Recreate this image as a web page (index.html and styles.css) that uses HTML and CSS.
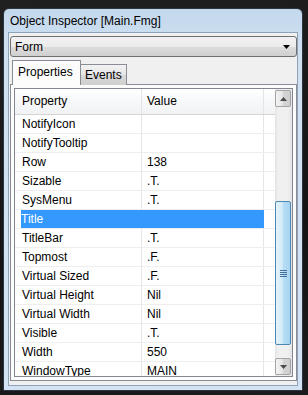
FILE: index.html
```html
<!DOCTYPE html>
<html lang="en">
<head>
    <meta charset="UTF-8">
    <title>Object Inspector</title>
    <link rel="stylesheet" href="styles.css">
</head>
<body>
    <div class="window">
        <div class="titlebar">Object Inspector [Main.Fmg]</div>
        <div class="client">
            <div class="combo">
                <span>Form</span>
                <svg class="arrow" width="7" height="4" viewBox="0 0 7 4"><path d="M0 0h7L3.5 4z" fill="#000"/></svg>
            </div>
            <div class="tabs">
                <div class="tab active">Properties</div>
                <div class="tab">Events</div>
            </div>
            <div class="page">
                <div class="grid">
                    <div class="list">
                        <div class="head">
                            <div class="ind"></div>
                            <div class="c1">Property</div>
                            <div class="c2">Value</div>
                            <div class="fill"></div>
                        </div>
                        <div class="row"><div class="ind"></div><div class="c1">NotifyIcon</div><div class="c2"></div><div class="fill"></div></div>
                        <div class="row"><div class="ind"></div><div class="c1">NotifyTooltip</div><div class="c2"></div><div class="fill"></div></div>
                        <div class="row"><div class="ind"></div><div class="c1">Row</div><div class="c2">138</div><div class="fill"></div></div>
                        <div class="row"><div class="ind"></div><div class="c1">Sizable</div><div class="c2">.T.</div><div class="fill"></div></div>
                        <div class="row"><div class="ind"></div><div class="c1">SysMenu</div><div class="c2">.T.</div><div class="fill"></div></div>
                        <div class="row selected"><div class="ind"></div><div class="c1">Title</div><div class="c2"></div><div class="fill"></div></div>
                        <div class="row"><div class="ind"></div><div class="c1">TitleBar</div><div class="c2">.T.</div><div class="fill"></div></div>
                        <div class="row"><div class="ind"></div><div class="c1">Topmost</div><div class="c2">.F.</div><div class="fill"></div></div>
                        <div class="row"><div class="ind"></div><div class="c1">Virtual Sized</div><div class="c2">.F.</div><div class="fill"></div></div>
                        <div class="row"><div class="ind"></div><div class="c1">Virtual Height</div><div class="c2">Nil</div><div class="fill"></div></div>
                        <div class="row"><div class="ind"></div><div class="c1">Virtual Width</div><div class="c2">Nil</div><div class="fill"></div></div>
                        <div class="row"><div class="ind"></div><div class="c1">Visible</div><div class="c2">.T.</div><div class="fill"></div></div>
                        <div class="row"><div class="ind"></div><div class="c1">Width</div><div class="c2">550</div><div class="fill"></div></div>
                        <div class="row"><div class="ind"></div><div class="c1">WindowType</div><div class="c2">MAIN</div><div class="fill"></div></div>
                    </div>
                    <div class="scroll">
                        <div class="sbtn">
                            <svg width="7" height="4" viewBox="0 0 7 4"><path d="M0 4h7L3.5 0z" fill="#4a4a4a"/></svg>
                        </div>
                        <div class="track">
                            <div class="gap-top"></div>
                            <div class="thumb">
                                <div class="grip"></div>
                            </div>
                        </div>
                        <div class="sbtn">
                            <svg width="7" height="4" viewBox="0 0 7 4"><path d="M0 0h7L3.5 4z" fill="#4a4a4a"/></svg>
                        </div>
                    </div>
                </div>
            </div>
        </div>
    </div>
</body>
</html>
```

FILE: styles.css
```css
* {
    box-sizing: border-box;
}

body {
    margin: 0;
    padding: 8px 0 0 3px;
    height: 395px;
    overflow: hidden;
    background: linear-gradient(170deg, #202020, #141414 60%, #1c1c1c);
    font-family: "Liberation Sans", Arial, sans-serif;
    font-size: 12px;
    color: #000;
}

.window {
    width: 300px;
    height: 383px;
    border: 1px solid #2b3440;
    border-radius: 6px 6px 0 0;
    background: linear-gradient(#c4d8ec, #cfe0f1 40px, #d3e3f3);
}

.titlebar {
    height: 23px;
    line-height: 25px;
    padding-left: 6px;
    white-space: nowrap;
}

.client {
    margin: 0 4px;
    height: 354px;
    border: 1px solid #8fa3b8;
    background-color: #f0f0f0;
    display: flex;
    flex-direction: column;
}

.combo {
    margin: 3px 0 0 1px;
    width: 287px;
    height: 21px;
    border: 1px solid #707070;
    border-radius: 3px;
    background: linear-gradient(#f2f2f2, #ebebeb 50%, #dddddd 51%, #cfcfcf);
    display: flex;
    align-items: center;
    justify-content: space-between;
    padding: 0 6px 0 4px;
}

.tabs {
    margin: 3px 0 -1px 3px;
    height: 25px;
    display: flex;
    align-items: flex-end;
    position: relative;
}

.tab {
    height: 21px;
    padding: 0 4px;
    line-height: 21px;
    border: 1px solid #898c95;
    border-bottom: none;
    background: linear-gradient(#f2f2f2, #e6e6e6 50%, #d9d9d9 51%, #cfcfcf);
}

.tab.active {
    height: 25px;
    width: 69px;
    padding: 0 5px;
    line-height: 22px;
    margin-right: -1px;
    background: #fcfcfc;
    position: relative;
    z-index: 1;
}

.page {
    margin-left: 1px;
    width: 287px;
    height: 297px;
    border: 1px solid #898c95;
    background-color: #fcfcfc;
    padding: 3px;
}

.grid {
    width: 279px;
    height: 289px;
    border: 1px solid #828790;
    background-color: #fff;
    display: flex;
}

.list {
    width: 260px;
    overflow: hidden;
}

.head, .row {
    display: flex;
}

.head {
    height: 26px;
    line-height: 25px;
    background: linear-gradient(#ffffff, #f7f8f9 50%, #f1f2f4);
    border-bottom: 1px solid #d5d5d5;
}

.row {
    height: 19px;
    line-height: 19px;
    border-bottom: 1px solid #eeeeee;
}

.ind {
    width: 6px;
}

.c1 {
    width: 121px;
    padding-left: 1px;
    border-right: 1px solid #e5e5e5;
    white-space: nowrap;
}

.c2 {
    width: 122px;
    padding-left: 5px;
    border-right: 1px solid #e5e5e5;
}

.fill {
    flex: 1;
}

.row.selected .c1,
.row.selected .c2 {
    background-color: #3399ff;
    color: #fff;
    border-right-color: #3399ff;
}

.row.selected .c1 {
    padding-left: 0;
}

.scroll {
    width: 17px;
    padding: 1px 0;
    display: flex;
    flex-direction: column;
    background: linear-gradient(to right, #e3e3e3, #f0f0f0 3px, #f0f0f0 13px, #e3e3e3);
}

.sbtn {
    height: 17px;
    border: 1px solid #a3a3a3;
    border-radius: 2px;
    margin: 0 1px 0 0;
    background: linear-gradient(to right, #f4f4f4, #e4e4e4 50%, #d4d4d4 51%, #cfcfcf);
    display: flex;
    align-items: center;
    justify-content: center;
}

.track {
    flex: 1;
    display: flex;
    flex-direction: column;
}

.gap-top {
    height: 94px;
}

.thumb {
    height: 144px;
    margin-right: 1px;
    border: 1px solid #4f87b3;
    border-radius: 2px;
    background: linear-gradient(to right, #e6f4fc, #cfe9f8 50%, #b7ddf4 51%, #a8d4f1);
    display: flex;
    align-items: center;
    justify-content: center;
}

.grip {
    width: 7px;
    height: 7px;
    background: repeating-linear-gradient(#3f6d97 0, #3f6d97 1px, transparent 1px, transparent 2px);
}
```
